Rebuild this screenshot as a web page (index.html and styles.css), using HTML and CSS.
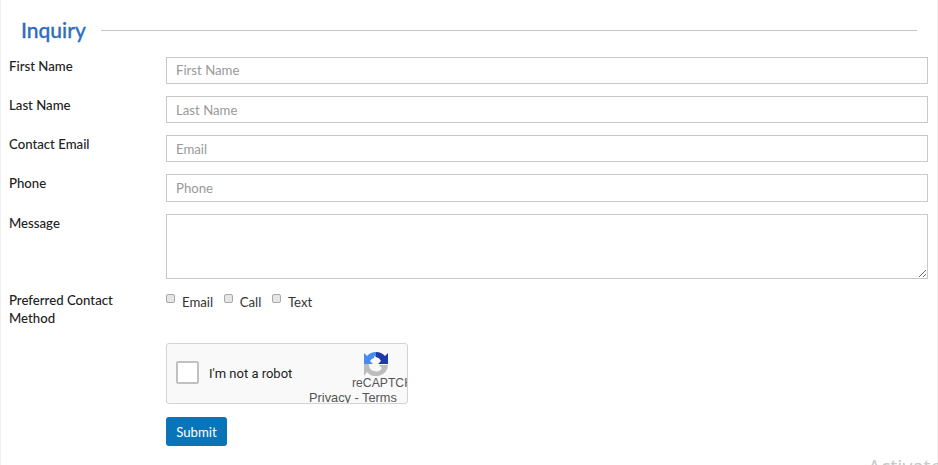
FILE: index.html
```html
<!DOCTYPE html>
<html>
<head lang="en">
    <meta charset="UTF-8">
    <title>Inquiry</title>
    <link rel="stylesheet" href="styles.css">
</head>
<body>
<div class="page">
    <div class="section-title">
        <h2>Inquiry</h2>
        <div class="section-line"></div>
    </div>
    <form class="inquiry-form">
        <div class="form-row">
            <label>First Name</label>
            <input type="text" class="list-input list-input-first" placeholder="First Name">
        </div>
        <div class="form-row">
            <label>Last Name</label>
            <input type="text" class="list-input" placeholder="Last Name">
        </div>
        <div class="form-row">
            <label>Contact Email</label>
            <input type="text" class="list-input" placeholder="Email">
        </div>
        <div class="form-row">
            <label>Phone</label>
            <input type="text" class="list-input list-input-tall" placeholder="Phone">
        </div>
        <div class="form-row">
            <label>Message</label>
            <textarea class="list-area"></textarea>
        </div>
        <div class="form-row form-row-method">
            <label>Preferred Contact Method</label>
            <div class="check-group">
                <span class="check-item"><input type="checkbox">Email</span>
                <span class="check-item"><input type="checkbox">Call</span>
                <span class="check-item"><input type="checkbox">Text</span>
            </div>
        </div>
        <div class="captcha">
            <div class="captcha-box"></div>
            <div class="captcha-label">I'm not a robot</div>
            <svg class="captcha-logo" viewBox="0 0 24 24" width="24" height="24">
                <path d="M0 24 L0 12 L5 12 A7 7 0 0 0 18 16 L15 13 L24 13 A12 12 0 0 1 3 20 Z" fill="#bdbdbd"/>
                <path d="M12 0 A12 12 0 0 0 3 4 L0 1 L0 12 L9 12 L6 9 A7 7 0 0 1 10 6 L10 4 L12 5 Z" fill="#4a8af4"/>
                <path d="M12 0 A12 12 0 0 1 21 4 L24 1 L24 12 L14 12 L17 9 A7 7 0 0 0 12 5 Z" fill="#1c3aa9"/>
            </svg>
            <div class="captcha-brand">reCAPTCHA</div>
            <div class="captcha-links">Privacy - Terms</div>
        </div>
        <button type="button" class="submit-btn">Submit</button>
    </form>
</div>
<div class="activate">Activate Windows</div>
</body>
</html>
```

FILE: styles.css
```css
html, body {
    margin: 0;
    padding: 0;
    height: 100%;
    overflow: hidden;
    background: #ffffff;
}
.page {
    box-sizing: border-box;
    width: 938px;
    height: 465px;
    padding: 0 9px 0 8px;
    border-left: 1px solid #f0f0f0;
    border-right: 1px solid #f0f0f0;
    font-family: Lato, "Liberation Sans", sans-serif;
    font-size: 13px;
    color: #222222;
}
.section-title {
    display: flex;
    align-items: center;
    height: 57px;
    padding: 2px 11px 0 12px;
    box-sizing: border-box;
}
.section-title h2 {
    margin: 0;
    font-size: 21px;
    font-weight: 500;
    color: #2f6dbf;
    -webkit-text-stroke: 0.3px #2f6dbf;
}
.section-line {
    flex: 1;
    height: 1px;
    margin: 2px 0 0 15px;
    background: #c4c4c4;
}
.form-row {
    display: flex;
    margin-bottom: 12px;
}
.form-row label {
    width: 157px;
    flex: none;
    font-weight: 500;
    line-height: 18px;
    font-size: 13.2px;
}
.list-input {
    flex: 1;
    box-sizing: border-box;
    height: 27px;
    padding: 0 9px;
    border: 1px solid #c8c8c8;
    font-family: Lato, "Liberation Sans", sans-serif;
    font-size: 13.2px;
}
.list-input-first {
    padding-bottom: 2px;
}
.list-input-tall {
    height: 28px;
}
.list-area {
    flex: 1;
    box-sizing: border-box;
    height: 65px;
    margin: 0;
    border: 1px solid #c8c8c8;
}
::placeholder {
    color: #999999;
    opacity: 1;
}
.form-row-method {
    margin-top: 12px;
    margin-bottom: 0;
    height: 52px;
}
.form-row-method label {
    width: 124px;
    margin-right: 33px;
}
.check-group {
    display: flex;
    gap: 10.6px;
    padding-top: 1px;
}
.check-item {
    color: #333333;
    line-height: 20px;
    font-size: 13.2px;
}
.check-item input {
    appearance: none;
    box-sizing: border-box;
    width: 9px;
    height: 9px;
    margin: 0 7px 0 0;
    vertical-align: 4px;
    background: #e6e6e6;
    border: 1px solid #a8a8a8;
    border-radius: 2px;
}
.captcha {
    position: relative;
    box-sizing: border-box;
    width: 242px;
    height: 61px;
    margin-left: 157px;
    background: #f9f9f9;
    border: 1px solid #d3d3d3;
    border-radius: 3px;
    overflow: hidden;
    font-family: Roboto, "Liberation Sans", sans-serif;
}
.captcha-box {
    position: absolute;
    left: 9px;
    top: 17px;
    width: 23px;
    height: 23px;
    box-sizing: border-box;
    background: #ffffff;
    border: 2px solid #c1c1c1;
    border-radius: 2px;
}
.captcha-label {
    position: absolute;
    left: 42px;
    top: 21px;
    font-size: 13px;
    line-height: 17px;
    color: #222222;
}
.captcha-logo {
    position: absolute;
    left: 197px;
    top: 8px;
}
.captcha-brand {
    position: absolute;
    left: 185px;
    top: 32px;
    font-family: "Liberation Sans", sans-serif;
    font-size: 12.2px;
    line-height: 15px;
    color: #555555;
    white-space: nowrap;
}
.captcha-links {
    position: absolute;
    left: 142px;
    top: 46px;
    font-family: "Liberation Sans", sans-serif;
    font-size: 12.8px;
    line-height: 15px;
    color: #555555;
    white-space: nowrap;
}
.submit-btn {
    display: block;
    width: 61px;
    height: 29px;
    margin: 13px 0 0 157px;
    padding: 0;
    background: #0a74b9;
    border: 0;
    border-radius: 3px;
    color: #ffffff;
    font-family: Lato, "Liberation Sans", sans-serif;
    font-size: 13.2px;
}
.activate {
    position: absolute;
    left: 868px;
    top: 453px;
    font-family: "Open Sans", sans-serif;
    font-size: 20px;
    line-height: 27px;
    color: #c8c8c8;
    white-space: nowrap;
}
```
